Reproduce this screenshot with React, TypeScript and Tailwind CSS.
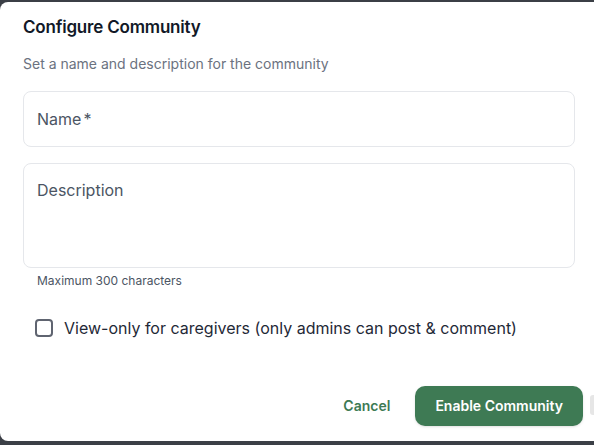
import { useState } from "react";

const App = () => {
  const [viewOnly, setViewOnly] = useState(false);

  return (
    <div className="h-[445px] w-[594px] overflow-hidden bg-[#3b3f46] pt-[2px] font-['Inter',sans-serif]">
      {/* Dialog */}
      <div className="relative flex h-[439px] w-[594px] flex-col rounded-l-lg bg-white pl-[23px] pr-[19px] pt-[11px]">
        <h2 className="text-[17px] font-semibold leading-7 tracking-[-0.2px] text-[#111827]">
          Configure Community
        </h2>
        <p className="mt-[13px] text-sm leading-5 text-[#6b7280]">
          Set a name and description for the community
        </p>

        {/* Name */}
        <div className="mt-[17px] flex h-[56px] items-center rounded-lg border border-[#e5e7eb] px-[13px]">
          <span className="text-base text-[#4b5563]">
            Name<span className="ml-[2px]">*</span>
          </span>
        </div>

        {/* Description */}
        <div className="mt-[16px] h-[105px] rounded-lg border border-[#e5e7eb] px-[13px] pt-[14px]">
          <span className="text-base leading-6 text-[#4b5563]">Description</span>
        </div>
        <p className="mt-[5px] pl-[14px] text-xs leading-4 text-[#4b5563]">
          Maximum 300 characters
        </p>

        {/* View-only checkbox */}
        <label className="mt-[27px] flex h-6 cursor-pointer items-center gap-3 pl-[12px]">
          <span
            onClick={() => setViewOnly(!viewOnly)}
            className="h-[18px] w-[18px] rounded-[4px] border-2 border-[#5f6470] bg-white"
          />
          <span className="-ml-[1px] text-base text-[#1f2937]">
            View-only for caregivers (only admins can post &amp; comment)
          </span>
        </label>

        {/* Actions */}
        <div className="-mr-[8px] mt-[46px] flex items-center justify-end gap-[25px]">
          <button className="text-sm font-semibold text-[#3d7a54]">Cancel</button>
          <button className="h-10 rounded-[10px] bg-[#3e7a54] px-5 text-sm font-semibold text-white shadow-sm">
            Enable Community
          </button>
        </div>

        {/* peeking element at right edge */}
        <div className="absolute left-[590px] top-[393px] h-[20px] w-[12px] rounded-[3px] bg-[#e6e6e6]" />
      </div>
    </div>
  );
};

export default App;
